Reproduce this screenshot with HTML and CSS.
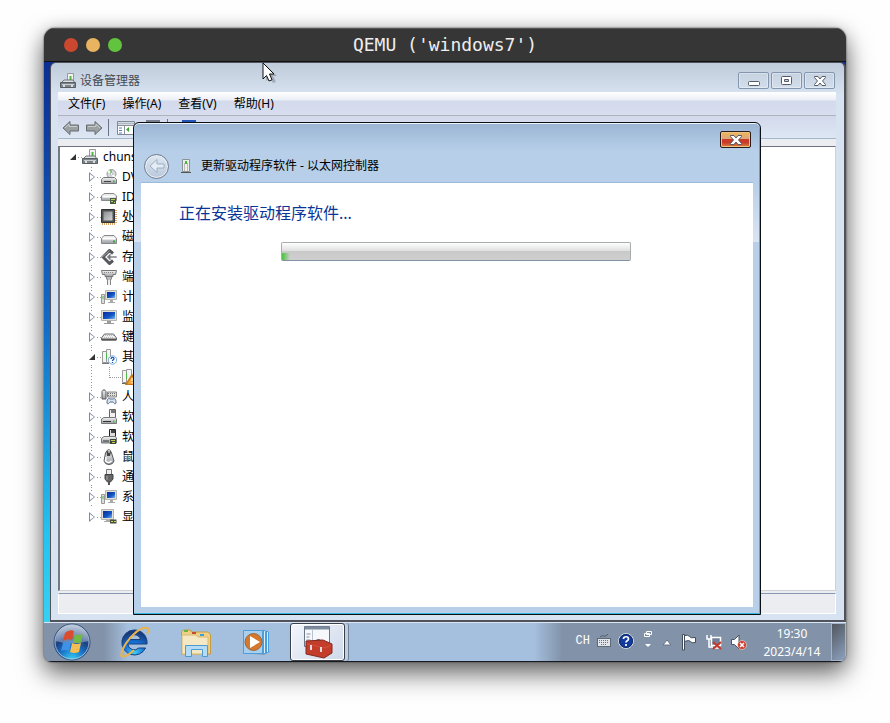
FILE: index.html
```html
<!DOCTYPE html>
<html lang="zh-CN">
<head>
<meta charset="utf-8">
<title>QEMU ('windows7')</title>
<link rel="stylesheet" href="styles.css">
</head>
<body>
<svg class="defs" aria-hidden="true">
  <defs>
    <linearGradient id="silver" x1="0" y1="0" x2="0" y2="1"><stop offset="0" stop-color="#f6f6f6"/><stop offset="1" stop-color="#9a9ea3"/></linearGradient>
    <linearGradient id="chip" x1="0" y1="0" x2="1" y2="1"><stop offset="0" stop-color="#8a8d90"/><stop offset="1" stop-color="#d2d4d6"/></linearGradient>
    <linearGradient id="screen" x1="0" y1="0" x2="1" y2="1"><stop offset="0" stop-color="#0a2a9a"/><stop offset=".6" stop-color="#1557c8"/><stop offset="1" stop-color="#7db8ee"/></linearGradient>
    <radialGradient id="orb" cx=".5" cy="1" r=".95"><stop offset="0" stop-color="#38d4f6"/><stop offset=".35" stop-color="#1a78cc"/><stop offset=".65" stop-color="#1c3f80"/><stop offset="1" stop-color="#a9b8cc"/></radialGradient>
    <radialGradient id="ie" cx=".5" cy=".9" r=".8"><stop offset="0" stop-color="#3ccdf8"/><stop offset=".5" stop-color="#1572d8"/><stop offset="1" stop-color="#173a78"/></radialGradient>
    <symbol id="i-computer" viewBox="0 0 16 16"><path d="M7.500.5h6v9h-6z" fill="#f2f2f2" stroke="#999"/><path d="M9.500 3h2v4h-2z" fill="#55b848"/><path d="M1 10l3-3h9l2 3z" fill="#dfe3e6" stroke="#6c7276"/><path d="M.5 9.500h15v5H.5z" fill="#7d858b" stroke="#565d63"/><path d="M2 11.500h12" stroke="#c9ced2"/><path d="M3 12h2v2H3zM11 12h2v2h-2z" fill="#ddd"/></symbol>
    <symbol id="i-dvd" viewBox="0 0 16 16"><circle cx="10.500" cy="5" r="4.500" fill="#d5dadd" stroke="#999"/><path d="M7 2l3 2M11 6l3 2" stroke="#fff" stroke-width="2"/><path d="M10 1v4" stroke="#66bb55" stroke-width="1.500"/><circle cx="10.500" cy="5" r="1.200" fill="#fff" stroke="#999" stroke-width=".5"/><path d="M.5 10.500L2.500 8.500h11l2 2v4H.5z" fill="url(#silver)" stroke="#777"/><path d="M3 12.500h7" stroke="#444"/><path d="M12 11.500h1.500v2H12z" fill="#4a4"/></symbol>
    <symbol id="i-ide" viewBox="0 0 16 16"><path d="M.5 7L3 4.500h10L15.500 7v4.500H.5z" fill="url(#silver)" stroke="#888"/><path d="M1.500 7.500h13" stroke="#fff" stroke-width="2"/><path d="M9 9h6v6H9z" fill="#4b5b45"/><path d="M10 10.500h4M10 12.500h2M13 13.500h1" stroke="#b9d35a"/></symbol>
    <symbol id="i-cpu" viewBox="0 0 16 16"><path d="M15 1v14M1 15h14" stroke="#d9a566" stroke-width="2" stroke-dasharray="1 1"/><path d="M.5.5h13v13H.5z" fill="#4e5154" stroke="#333"/><path d="M2.500 2.500h9v9h-9z" fill="url(#chip)"/></symbol>
    <symbol id="i-disk" viewBox="0 0 16 16"><path d="M.5 9.500L3 6.500h10l2.500 3v5H.5z" fill="url(#silver)" stroke="#888"/><path d="M1.500 9.500h13" stroke="#fff" stroke-width="2"/><path d="M12 11.500h2v2h-2z" fill="#3ea33a"/></symbol>
    <symbol id="i-storage" viewBox="0 0 16 16"><path d="M12 4.500L8.500 1.500 2 8l6.500 6.500L12 11.500" fill="none" stroke="#55585c" stroke-width="3"/><path d="M1 8l7.500-6" stroke="#9fa2a6"/><path d="M9 4.500L5.500 8 9 11.500 10.500 10 9.500 9H16V7H9.500l1-1z" fill="#77797d" stroke="#fff" stroke-width=".6"/></symbol>
    <symbol id="i-port" viewBox="0 0 16 16"><path d="M.5 1.500h15l-1 4H12v2H4v-2H1.500z" fill="url(#silver)" stroke="#777"/><path d="M3 3.500h10" stroke="#888" stroke-dasharray="1 1"/><path d="M5 7.500h6l-1.500 4h-3z" fill="#bbb" stroke="#777"/><path d="M8 11v5" stroke="#888" stroke-width="4"/><path d="M8 11v5" stroke="#eee" stroke-width="2"/></symbol>
    <symbol id="i-pc" viewBox="0 0 16 16"><path d="M4.500 1.500h11v9h-11z" fill="#e2e0d8" stroke="#b5b5b0"/><path d="M6 3h8v6H6z" fill="url(#screen)"/><path d="M9 11h3v2h2v1H7v-1h2z" fill="#aaa"/><path d="M.5 5.500h3v9h-3z" fill="#ddd" stroke="#999"/><path d="M2 7v3" stroke="#49b848"/></symbol>
    <symbol id="i-monitor" viewBox="0 0 16 16"><path d="M.5 1.500h15v10H.5z" fill="#e2e0d8" stroke="#b5b5b0"/><path d="M2 3h12v7H2z" fill="url(#screen)"/><path d="M6 12h4v2h3v1H3v-1h3z" fill="#999"/></symbol>
    <symbol id="i-keyboard" viewBox="0 0 16 16"><path d="M.5 9l3-4h9l3 4v2H.5z" fill="#eee" stroke="#666"/><path d="M1 10.500h14" stroke="#555" stroke-width="2"/><path d="M4 6.500h9M3 8.500h10" stroke="#bbb" stroke-dasharray="1 1"/></symbol>
    <symbol id="i-unknown" viewBox="0 0 16 16"><path d="M1.500 2.500h4v11h-4zM5.500.5h4v13h-4z" fill="#f4f4f4" stroke="#999"/><path d="M5.500 4v6" stroke="#49b848"/><path d="M1 14.500h7" stroke="#777"/><circle cx="11.500" cy="11" r="4.200" fill="#fff" stroke="#7ba9d5"/><path d="M10 10c0-2 3-2 3-.3 0 1.200-1.500 1-1.500 2.300M11.500 13v1" fill="none" stroke="#1356b5" stroke-width="1.300"/></symbol>
    <symbol id="i-warn" viewBox="0 0 16 16"><path d="M.5 1.500h4v12h-4zM4.500.5h5v13h-5z" fill="#f4f4f4" stroke="#999"/><path d="M4.500 4v6" stroke="#49b848"/><path d="M0 14.500h7" stroke="#666"/><path d="M10 6l6 9.500H4z" fill="#f2a93a" stroke="#c77a18" stroke-width="1.500"/><path d="M10 9v3M10 13v1.500" stroke="#fff"/></symbol>
    <symbol id="i-hid" viewBox="0 0 16 16"><path d="M1 2.500Q3-1 5 2.500V10H1z" fill="url(#silver)" stroke="#555"/><path d="M6.500 3h9v5h-9z" fill="#ddd" stroke="#888"/><path d="M7 4.500h8M7 6.500h8" stroke="#777" stroke-dasharray="1 1"/><path d="M6 14c0-5 2-5 3-4h3c2-1 3 0 3 4-1 2-2 0-3-1H9c-1 1-2 3-3 1z" fill="#d7e4ee" stroke="#568"/></symbol>
    <symbol id="i-floppy" viewBox="0 0 16 16"><path d="M8.500.5h6v8h-6z" fill="#f0f1f2" stroke="#666"/><path d="M10 1h4v3h-4z" fill="#777"/><path d="M.5 10L3 8.500h11l1.500 1.500v4.500H.5z" fill="url(#silver)" stroke="#777"/><path d="M2 12.500h8" stroke="#333"/><path d="M12 11.500h1.500v2H12z" fill="#3c3"/></symbol>
    <symbol id="i-floppyc" viewBox="0 0 16 16"><path d="M8.500.5h6v7h-6z" fill="#ddd" stroke="#222"/><path d="M10 1h4v3h-4z" fill="#444"/><path d="M.5 9.500L3 7.500h11l1.500 1.500v5H.5z" fill="url(#silver)" stroke="#777"/><path d="M2 12h6" stroke="#333"/><path d="M9 10h6v5H9z" fill="#3c4535"/><path d="M10 11.500h4M11 13.500h3" stroke="#c6cf55"/></symbol>
    <symbol id="i-mouse" viewBox="0 0 16 16"><path d="M4.500 4Q8-3 10.500 4L13 12q-1 3.500-5 3.500T3 12z" fill="url(#silver)" stroke="#555"/><path d="M5.500 3q2-3 4.500 0L9 7H6z" fill="#444"/><path d="M8 1v3" stroke="#fff"/><path d="M5 8l-.5 4q3 3 6 0" stroke="#fff" fill="none" stroke-width="1.500"/></symbol>
    <symbol id="i-usb" viewBox="0 0 16 16"><path d="M5.500.5h5v5h-5z" fill="#eee" stroke="#777"/><path d="M4 5.500h8V10L9.500 13h-3L4 10z" fill="#666" stroke="#444"/><path d="M6 7v4" stroke="#aaa"/><path d="M8 13v3" stroke="#555" stroke-width="2"/></symbol>
    <symbol id="i-display" viewBox="0 0 16 16"><path d="M.5.500h12v10H.5z" fill="#e2e0d8" stroke="#b5b5b0"/><path d="M2 2h9v7H2z" fill="url(#screen)"/><path d="M5 11h4v2H3v-1h2z" fill="#aaa"/><path d="M9 10.500h6.500v4H9z" fill="#46513d"/><path d="M10 12.500h5" stroke="#c6d265" stroke-dasharray="2 1"/></symbol>
    <symbol id="i-device" viewBox="0 0 12 16"><path d="M2.500 1.500h7v12h-7z" fill="#eef0ee" stroke="#8b9292"/><path d="M4.500 5v8M7.500 5v8" stroke="#b7bbb8"/><path d="M6 3v3" stroke="#46b83c" stroke-width="2"/><path d="M1 14.500h10" stroke="#555"/></symbol>
    <symbol id="i-arrow" viewBox="0 0 18 16"><path d="M1 8l7-6.500V5h8.500v6H8v3.500z" fill="#9ba0a3" stroke="#686d71"/><path d="M3 8l4-4v2.500h8" fill="none" stroke="#c8cccd"/></symbol>
    <symbol id="i-x" viewBox="0 0 12 10"><path d="M.5.5h3.500L6 3 8 .5h3.500v1L8.500 5l3 3.500v1H8L6 7 4 9.500H.5v-1l3-3.500-3-3.500z" fill="#fff" stroke="#565b66"/></symbol>
  </defs>
</svg>

<main class="stage">
<section class="vm">
  <header class="vm-bar">
    <div class="lights"><span class="light red"></span><span class="light amber"></span><span class="light green"></span></div>
    <h1 class="vm-title">QEMU ('windows7')</h1>
  </header>

  <div class="desktop">
    <section class="manager">
      <header class="manager-title">
        <svg class="icon"><use href="#i-computer"/></svg>
        <h2 class="manager-name">设备管理器</h2>
        <div class="win-buttons">
          <button class="win-button" aria-label="最小化"><svg width="12" height="12" viewBox="0 0 12 12"><rect x=".5" y="6.500" width="11" height="4" rx="1" fill="#fff" stroke="#555b67"/></svg></button>
          <button class="win-button" aria-label="最大化"><svg width="12" height="10" viewBox="0 0 12 10"><rect x=".5" y=".5" width="10" height="8" rx="1" fill="#fff" stroke="#555b67"/><path d="M3.500 3.500h4v2h-4z" fill="#c7d0df" stroke="#555b67"/></svg></button>
          <button class="win-button" aria-label="关闭"><svg width="12" height="10"><use href="#i-x"/></svg></button>
        </div>
      </header>
      <div class="client">
        <nav class="menu">
          <button class="menu-item">文件(F)</button>
          <button class="menu-item">操作(A)</button>
          <button class="menu-item">查看(V)</button>
          <button class="menu-item">帮助(H)</button>
        </nav>
        <div class="toolbar">
          <button class="tool" aria-label="后退"><svg width="18" height="16"><use href="#i-arrow"/></svg></button>
          <button class="tool" aria-label="前进"><svg class="flip" width="18" height="16"><use href="#i-arrow"/></svg></button>
          <span class="tool-sep"></span>
          <button class="tool" aria-label="显示控制台树"><svg width="18" height="14" viewBox="0 0 18 14"><path d="M.5.5h17v13H.5z" fill="#fff" stroke="#7f8996"/><path d="M1 2.500h16" stroke="#aeb7c5" stroke-width="2"/><path d="M7.500 4v9M1 4.500h16" stroke="#8d9298"/><path d="M2 7h3M2 9.500h3M2 12h3" stroke="#4a82bd"/><path d="M12 6v5L9 8.500z" fill="#36a92c"/></svg></button>
          <button class="tool wide" aria-label="属性"><svg class="icon" viewBox="0 0 16 16"><path d="M1.500.5h13v15h-13z" fill="#fff" stroke="#777f8b"/><path d="M1 1h14" stroke="#777f8b" stroke-width="2"/><path d="M4 6h8M4 9h8M4 12h8" stroke="#8a94a3"/></svg></button>
          <span class="tool-sep"></span>
          <button class="tool wide" aria-label="帮助"><svg class="icon" viewBox="0 0 16 16"><path d="M1 0h14v16H1z" fill="#2355b8"/><path d="M6 6c0-3 5-3 5 0 0 2-2.500 1.500-2.500 3.500M8.500 11v2" fill="none" stroke="#fff" stroke-width="2"/></svg></button>
        </div>
        <ul class="tree">
          <li class="node root"><span class="twisty open"></span><svg class="icon"><use href="#i-computer"/></svg><span>chunsheng</span></li>
          <li class="node"><span class="twisty"></span><svg class="icon"><use href="#i-dvd"/></svg><span>DVD</span></li>
          <li class="node"><span class="twisty"></span><svg class="icon"><use href="#i-ide"/></svg><span>IDE</span></li>
          <li class="node"><span class="twisty"></span><svg class="icon"><use href="#i-cpu"/></svg><span>处理器</span></li>
          <li class="node"><span class="twisty"></span><svg class="icon"><use href="#i-disk"/></svg><span>磁盘驱动器</span></li>
          <li class="node"><span class="twisty"></span><svg class="icon"><use href="#i-storage"/></svg><span>存储控制器</span></li>
          <li class="node"><span class="twisty"></span><svg class="icon"><use href="#i-port"/></svg><span>端口</span></li>
          <li class="node"><span class="twisty"></span><svg class="icon"><use href="#i-pc"/></svg><span>计算机</span></li>
          <li class="node"><span class="twisty"></span><svg class="icon"><use href="#i-monitor"/></svg><span>监视器</span></li>
          <li class="node"><span class="twisty"></span><svg class="icon"><use href="#i-keyboard"/></svg><span>键盘</span></li>
          <li class="node"><span class="twisty open"></span><svg class="icon"><use href="#i-unknown"/></svg><span>其他设备</span></li>
          <li class="node leaf"><span class="elbow"></span><svg class="icon"><use href="#i-warn"/></svg></li>
          <li class="node"><span class="twisty"></span><svg class="icon"><use href="#i-hid"/></svg><span>人体学输入设备</span></li>
          <li class="node"><span class="twisty"></span><svg class="icon"><use href="#i-floppy"/></svg><span>软盘驱动器</span></li>
          <li class="node"><span class="twisty"></span><svg class="icon"><use href="#i-floppyc"/></svg><span>软盘驱动器控制器</span></li>
          <li class="node"><span class="twisty"></span><svg class="icon"><use href="#i-mouse"/></svg><span>鼠标和其他指针设备</span></li>
          <li class="node"><span class="twisty"></span><svg class="icon"><use href="#i-usb"/></svg><span>通用串行总线控制器</span></li>
          <li class="node"><span class="twisty"></span><svg class="icon"><use href="#i-pc"/></svg><span>系统设备</span></li>
          <li class="node last"><span class="twisty"></span><svg class="icon"><use href="#i-display"/></svg><span>显示适配器</span></li>
        </ul>
        <footer class="status"></footer>
      </div>
    </section>

    <section class="wizard" role="dialog" aria-labelledby="wizard-name">
      <header class="wizard-top">
        <button class="close" aria-label="关闭"><svg width="12" height="10"><use href="#i-x"/></svg></button>
      </header>
      <div class="wizard-head">
        <button class="back" aria-label="返回"><svg width="16" height="16" viewBox="0 0 16 16"><path d="M1 8l7-6.500V6h7v4H8v4.500z" fill="#e4edf6" stroke="#a0aec0"/></svg></button>
        <svg class="device" width="12" height="16"><use href="#i-device"/></svg>
        <h2 class="wizard-name" id="wizard-name">更新驱动程序软件 - 以太网控制器</h2>
      </div>
      <div class="wizard-body">
        <p class="wizard-message" id="message">正在安装驱动程序软件...</p>
        <div class="progress" role="progressbar" aria-labelledby="message"><span class="progress-fill"></span></div>
      </div>
    </section>

    <svg class="pointer" width="16" height="22" viewBox="0 0 16 22" aria-hidden="true"><path d="M4 3v16l4-3 3 5 3-1-3-6h4z" fill="#556" opacity=".35"/><path d="M1 1v16l3.500-3.500L7 19l3-1.200L7.500 12H12z" fill="#fff" stroke="#111"/></svg>
  </div>

  <footer class="taskbar">
    <button class="start" aria-label="开始"><svg width="38" height="38" viewBox="0 0 38 38"><circle cx="19" cy="19" r="18" fill="url(#orb)" stroke="#34517b"/><path d="M3 18a16 16 0 0 1 32 0q-16 5-32 0z" fill="#d7e2ee" opacity=".4"/><circle cx="19" cy="19" r="17" fill="none" stroke="#b9cbe0" opacity=".8"/><path d="M12 10q4-4 9-2l-2 9q-5-2-9 1z" fill="#dc4c2c"/><path d="M22 11q4 2 8 0l-2 8q-4 2-8 0z" fill="#73ba45"/><path d="M10 20q4-2 8 0l-2 8q-4-2-8 0z" fill="#3e91e4"/><path d="M19 20q4 2 9 0l-2 9q-5 2-9 0z" fill="#f3bd52"/></svg></button>
    <button class="task" aria-label="Internet Explorer"><svg width="32" height="32" viewBox="0 0 32 32"><path d="M16 4a12.500 12.500 0 1 0 11.600 18h-6.800a6.500 6.500 0 0 1-11-4H29A12.500 12.500 0 0 0 16 4zm-6 9.500a6.500 6.500 0 0 1 12.500 0z" fill="url(#ie)" stroke="#17407f"/><path d="M5 24C-1 34 9 31 16 24M4 25C9 13 22 0 29 2q3 1 0 6" fill="none" stroke="#e9b34d" stroke-width="2"/></svg></button>
    <button class="task" aria-label="资源管理器"><svg width="34" height="32" viewBox="0 0 34 32"><path d="M2.500 28V6l2-2h7l1 2h17l2 3v19z" fill="#eed083" stroke="#c79b45"/><path d="M5 5h4" stroke="#62b747" stroke-width="2"/><path d="M3 9h14l2 2h10v17H3z" fill="#f4e9c4" stroke="#d9ba73"/><path d="M13 7h4" stroke="#c7492d" stroke-width="2"/><path d="M21 9h4" stroke="#3c9be0" stroke-width="2"/><path d="M6.500 19.500h22v11h-5v-7h-11v7h-6z" fill="#b5dcf5" stroke="#4e9bd2"/></svg></button>
    <button class="task" aria-label="Windows Media Player"><svg width="30" height="28" viewBox="0 0 30 28"><path d="M12 26l17-3-7 4z" fill="#667b95" opacity=".5"/><path d="M24.500 3l2 1v20l-2 1zM21.500 2l2 1v22l-2 1z" fill="#d9eefb" stroke="#4b9eda"/><path d="M1.500 2.500h19v23h-19z" fill="#a9cfef" stroke="#4b9eda"/><circle cx="11.500" cy="14" r="8.500" fill="#d3782c" stroke="#9f693d"/><path d="M8 8l10 6-10 6z" fill="#fff"/></svg></button>
    <button class="task active" aria-label="设备管理器"><svg width="34" height="34" viewBox="0 0 34 34"><path d="M3.500 1.500h25v20h-25z" fill="#f6f8fb" stroke="#6a7688"/><path d="M4 3h24" stroke="#7d8b9e" stroke-width="3"/><path d="M11.500 5v17" stroke="#b8c3d2"/><path d="M5.500 9h4M5.500 12h3M5.500 15h4" stroke="#8c9199"/><path d="M13 18q5-6 9 1" fill="none" stroke="#333" stroke-width="2"/><path d="M5 16l17-1 9 4v9l-8 5-18-4z" fill="#c43c2a" stroke="#842b22"/><path d="M6 19l18 4 6-3" fill="none" stroke="#d0503c"/><path d="M10 20v5M20 22v5" stroke="#ddd" stroke-width="2"/></svg></button>

    <div class="tray">
      <div class="input-bar">
        <span class="lang">CH</span>
        <svg width="14" height="14" viewBox="0 0 14 14"><path d="M3 3q2-2 4-1t4-2" fill="none" stroke="#56606c"/><rect x=".5" y="4.500" width="13" height="8" fill="#dfe4ea" stroke="#5f6a77"/><path d="M2 6.500h10M2 8.500h10M4 10.500h6" stroke="#6a7684" stroke-dasharray="1 1"/></svg>
        <svg width="16" height="16" viewBox="0 0 16 16"><circle cx="8" cy="8" r="7.500" fill="#123b9d" stroke="#d7dce1"/><circle cx="8" cy="8" r="6.500" fill="none" stroke="#122b66"/><path d="M5.500 6c0-3 5-3 5 0 0 2-2.500 1.500-2.500 3.500M8 11v2" fill="none" stroke="#fff" stroke-width="1.700"/></svg>
      </div>
      <svg width="10" height="24" viewBox="0 0 10 24"><path d="M3.500 1.500h5v3h-5zM1.500 3.500h5v3h-5z" fill="#8192a8" stroke="#fff"/><path d="M2 14h6l-3 3z" fill="#fff"/></svg>
      <svg width="10" height="8" viewBox="0 0 10 8"><path d="M5 2l4 5H1z" fill="#fff" stroke="#667487"/></svg>
      <svg width="16" height="18" viewBox="0 0 16 18"><path d="M1.500 1.500h2V17h-2z" fill="#fff" stroke="#414b59"/><path d="M3.500 2.500q4-1 5 1t6 1v5q-4 1-5-1t-6 0z" fill="#fff" stroke="#414b59"/></svg>
      <svg width="16" height="16" viewBox="0 0 16 16"><path d="M5.500 3.500h9v8h-9z" fill="#718096" stroke="#fff" stroke-width="1.500"/><path d="M1 1v4h4V1M3 5v8h4M8 14h6" fill="none" stroke="#fff" stroke-width="1.500"/><path d="M7 8l8 7M15 8l-8 7" stroke="#c7372b" stroke-width="2"/></svg>
      <svg width="16" height="16" viewBox="0 0 16 16"><path d="M.5 5.500h3L8 1v14L3.500 10.500h-3z" fill="#fff" stroke="#4b5563"/><circle cx="11" cy="11" r="4.500" fill="#cc3e2e" stroke="#fff" stroke-width=".5"/><path d="M9 9l4 4M13 9l-4 4" stroke="#fff" stroke-width="1.500"/></svg>
    </div>
    <div class="clock"><time>19:30</time><time datetime="2023-04-14">2023/4/14</time></div>
    <button class="peek" aria-label="显示桌面"></button>
  </footer>
</section>
</main>
</body>
</html>
```

FILE: styles.css
```css
* { box-sizing: border-box; }

body {
  margin: 0;
  background: #fefefe;
  color: #000;
  font: 12px/20px "Noto Sans", "Noto Sans CJK SC", sans-serif;
}

h1, h2, p, ul { margin: 0; padding: 0; font-weight: normal; }
ul { list-style: none; }
button { margin: 0; padding: 0; border: 0; background: none; color: inherit; font: inherit; }
svg { display: block; flex: none; }
.defs { position: absolute; width: 0; height: 0; }
.icon { width: 16px; height: 16px; }

.stage {
  display: flex;
  min-height: 100vh;
  padding: 28px 44px 61px;
}

.vm {
  display: flex;
  flex: 1;
  flex-direction: column;
  min-width: 0;
  overflow: hidden;
  border-radius: 11px 11px 8px 8px;
  background: #8192a8;
  box-shadow: 0 0 2px #333, 0 12px 26px rgba(0, 0, 0, .55), 0 2px 18px rgba(0, 0, 0, .2);
}

.vm-bar {
  display: grid;
  grid-template-columns: 1fr auto 1fr;
  align-items: center;
  height: 34px;
  padding: 0 20px;
  border-top: 1px solid #555;
  border-bottom: 1px solid #111;
  background: #363636;
}
.lights { display: flex; gap: 8px; }
.light { width: 14px; height: 14px; border-radius: 50%; }
.red { background: #cb472f; }
.amber { background: #e8b45f; }
.green { background: #62c43e; }
.vm-title { color: #eee; font: 18px/32px "DejaVu Sans Mono", monospace; }

.desktop {
  position: relative;
  display: flex;
  flex: 1;
  padding: 0 0 0 6px;
  background: linear-gradient(#0d2e91, #1268c4 45%, #25c4f0 85%, #36d0f2);
}

/* Device manager window */
.manager {
  display: flex;
  flex: 1;
  flex-direction: column;
  min-width: 0;
  padding: 0 8px 6px 7px;
  border: 1px solid #51535c;
  border-width: 1px 2px 2px 1px;
  border-radius: 6px 6px 0 0;
  background: linear-gradient(#bfcbda, #d8e3f1 32px);
}
.manager-title { display: flex; align-items: center; gap: 4px; height: 29px; padding: 6px 1px 0 2px; }
.manager-name { color: #464a52; font-size: 12px; line-height: 20px; }
.win-buttons { display: flex; gap: 2px; margin-left: auto; }
.win-button {
  display: flex;
  align-items: center;
  justify-content: center;
  width: 31px;
  height: 17px;
  border: 1px solid #8495af;
  border-radius: 2px;
  box-shadow: inset 0 0 0 1px rgba(255, 255, 255, .35);
}

.client { display: flex; flex: 1; flex-direction: column; background: #ecedf1; }
.menu {
  display: flex;
  gap: 17px;
  height: 24px;
  padding: 2px 10px;
  border-bottom: 1px solid #b1b3ba;
  background: linear-gradient(#fff, #eceff6 8px, #d3daec 9px, #d8def0);
}
.toolbar {
  display: flex;
  align-items: center;
  gap: 5px;
  height: 23px;
  padding: 1px 4px 0;
  border-bottom: 1px solid #a3b7cf;
  background: linear-gradient(#d3d9ec, #dde7f3);
}
.tool-sep { width: 1px; height: 17px; margin: 0 3px 0 0; background: #697384; }
.wide { padding: 0 1px 0 5px; }
.flip { transform: scaleX(-1); }

.tree {
  flex: 1;
  margin-top: 7px;
  border: 1px solid #cfd1d5;
  border-top: 1px solid #6d737e;
  border-left: 2px solid #747a84;
  background: #fff;
}
.node { display: flex; align-items: center; height: 20px; margin-left: 29px; }
.node > .icon { margin-right: 5px; }
.node:not(.root):not(.last) { background: repeating-linear-gradient(#999 0 1px, transparent 1px 3px) 2px 0 / 1px 20px no-repeat; }
.root { margin-left: 10px; }
.twisty { display: flex; align-items: center; width: 12px; height: 12px; background: #fff repeating-linear-gradient(90deg, #999 0 1px, transparent 1px 3px) 8px 6px / 4px 1px no-repeat; }
.twisty::before {
  content: "";
  width: 6px;
  height: 10px;
  background: #7f8ca3;
  clip-path: polygon(0 0, 6px 5px, 0 10px, 0 0, 1px 2px, 1px 8px, 5px 5px, 1px 2px);
}
.twisty.open::before { width: 6px; height: 6px; background: #333; clip-path: polygon(100% 0, 100% 100%, 0 100%); }
.elbow { width: 12px; height: 11px; margin: -9px 1px 0 20px; border: 1px dotted #999; border-width: 0 0 1px 1px; }

.status {
  height: 21px;
  margin-top: 2px;
  border: 1px solid #fff;
  border-top-color: #8798b0;
  background: #ecedf1;
}

/* Driver update wizard, floating over the manager */
.wizard {
  position: absolute;
  inset: 60px 85px 7px 89px;
  display: flex;
  flex-direction: column;
  padding: 0 7px 7px;
  border: 1px solid #0c0f14;
  border-radius: 6px 6px 0 0;
  background:
    linear-gradient(#b7cfe9, #dbe5f3 60px) left 60px / 7px 59px no-repeat,
    linear-gradient(#b7cfe9, #dbe5f3 60px) right 60px / 7px 59px no-repeat,
    linear-gradient(#9ab4d2, #b7cfe9 28px);
  box-shadow: inset 0 1px #eef4fb, inset -1px -1px #37b7df;
}
.wizard-top { display: flex; justify-content: flex-end; padding: 8px 2px 0; }
.close {
  display: flex;
  align-items: center;
  justify-content: center;
  width: 31px;
  height: 17px;
  border: 1px solid #2c1c19;
  border-radius: 2px;
  background: linear-gradient(#ecb658, #dfa77b 45%, #c93b28 46% 70%, #db8440);
  box-shadow: inset 0 0 0 1px #ecc287;
}
.wizard-head { display: flex; align-items: center; height: 35px; padding: 2px 3px 0; border-bottom: 1px solid #9bb9d8; }
.back {
  display: flex;
  align-items: center;
  justify-content: center;
  width: 25px;
  height: 25px;
  border: 1px solid #717c8c;
  border-radius: 50%;
  background: linear-gradient(#dfe8f2, #b8c8db);
  box-shadow: inset 0 0 0 1px #e9f0f7;
}
.device { margin: 0 9px 0 11px; }
.wizard-name { font-size: 12px; line-height: 20px; }
.wizard-body { flex: 1; padding: 18px 38px; background: #fff; }
.wizard-message { color: #0a3596; font-size: 16px; line-height: 24px; }
.progress {
  width: 350px;
  height: 19px;
  margin: 17px auto 0 102px;
  overflow: hidden;
  border: 1px solid #a8acae;
  border-bottom-color: #8391a5;
  border-radius: 2px;
  background: linear-gradient(#fff, #dfe0e0 45%, #c8c9c8 50%, #cfcfcf);
}
.progress-fill { display: block; width: 8px; height: 7px; margin-top: 10px; background: linear-gradient(90deg, #48c43b, transparent); }

.pointer { position: absolute; left: 218px; top: 0; }

/* Taskbar */
.taskbar {
  display: flex;
  align-items: center;
  height: 40px;
  padding-left: 9px;
  border-top: 1px solid #dce6f3;
  border-bottom: 1px solid #17191e;
  background: linear-gradient(90deg, #8293a9 60px, #a5bfde 84px, #a5bfde 490px, #8293a9 518px);
}
.start { margin-right: 21px; }
.task { display: flex; align-items: center; justify-content: center; width: 61px; height: 38px; }
.start + .task { width: 44px; margin-left: 0; margin-right: 9px; }
.task.active {
  width: 55px;
  margin-left: 3px;
  border: 1px solid #3b414b;
  border-radius: 3px;
  background: linear-gradient(135deg, #f3f6fb, #cfd9ea);
  box-shadow: inset 0 0 0 1px #fff, 3px 0 #bfcde0, 4px 0 #6f7f95;
}
.tray { display: flex; align-items: center; gap: 9px; margin: 0 6px 0 auto; }
.input-bar { display: flex; align-items: center; gap: 7px; padding-bottom: 2px; }
.lang { color: #fff; font: 12px/20px "Liberation Mono", monospace; }
.clock {
  display: flex;
  flex-direction: column;
  align-items: center;
  width: 78px;
  padding-top: 2px;
  color: #fff;
  line-height: 18px;
}
.peek { align-self: stretch; width: 15px; border: 1px solid #a3b4cb; background: linear-gradient(135deg, #50565f, #8da2be); }
```
